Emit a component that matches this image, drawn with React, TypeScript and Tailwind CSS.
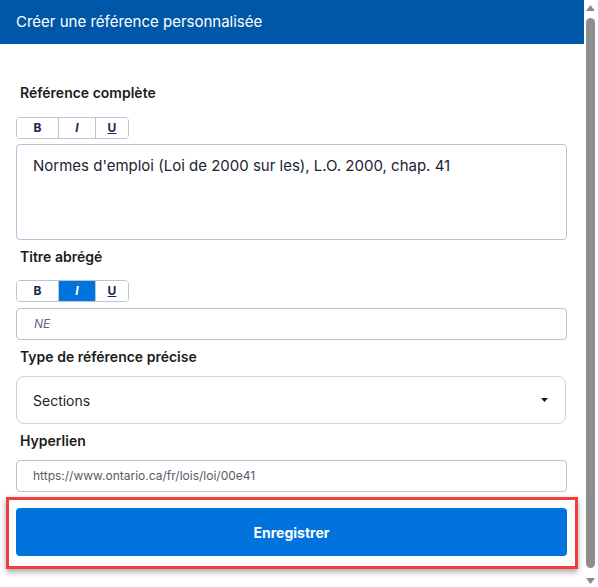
import React from 'react';

const font = { fontFamily: 'Inter, "Noto Sans", sans-serif' };

const Toolbar: React.FC<{ active?: 'B' | 'I' | 'U' }> = ({ active }) => {
  const btn = (key: 'B' | 'I' | 'U', w: string, extra: string) => (
    <div
      className={`${w} flex items-center justify-center text-[12px] font-bold ${extra} ${
        active === key ? 'bg-[#0073dd] text-white' : 'bg-white text-[#1b2550]'
      }`}
    >
      {key === 'I' ? <span className="italic">I</span> : key === 'U' ? <span className="underline">U</span> : 'B'}
    </div>
  );
  return (
    <div className="flex h-[22px] w-[113px] rounded-[4px] border border-[#b8c6da] overflow-hidden">
      {btn('B', 'w-[42px]', 'border-r border-[#b8c6da]')}
      {btn('I', 'w-[37px]', 'border-r border-[#b8c6da]')}
      {btn('U', 'flex-1', '')}
    </div>
  );
};

const Label: React.FC<{ children: React.ReactNode; className?: string }> = ({ children, className }) => (
  <div className={`pl-1 h-5 text-[14px] leading-5 font-semibold text-[#1c1c1c] ${className ?? ''}`}>{children}</div>
);

export default function App() {
  return (
    <div className="flex w-[598px] h-[587px] bg-white overflow-hidden" style={font}>
      {/* Main */}
      <div className="w-[584px] flex flex-col">
        <div className="h-[44px] bg-[#0057a7] flex items-center px-4 text-white text-[15px]">
          Créer une référence personnalisée
        </div>
        <div className="px-4 pt-[39px]">
          <Label>Référence complète</Label>
          <div className="mt-[14px]">
            <Toolbar />
          </div>
          <div className="mt-[5px] w-[551px] h-[96px] rounded-[4px] border border-[#b7c5d9] px-4 pt-[10px] text-[15px] text-[#1a2433]">
            Normes d'emploi (Loi de 2000 sur les), L.O. 2000, chap. 41
          </div>

          <Label className="mt-[7px]">Titre abrégé</Label>
          <div className="mt-[13px]">
            <Toolbar active="I" />
          </div>
          <div className="mt-[6px] w-[551px] h-[32px] rounded-[4px] border border-[#b7c5d9] flex items-center px-[17px] text-[12px] italic text-[#5b6880]">
            NE
          </div>

          <Label className="mt-[7px]">Type de référence précise</Label>
          <div className="mt-[9px] w-[550px] h-[48px] rounded-[8px] border border-[#d2d2d2] flex items-center justify-between pl-4 pr-[17px] text-[14px] text-[#222]">
            <span>Sections</span>
            <svg width="7" height="4" viewBox="0 0 7 4">
              <path d="M0 0h7L3.5 4z" fill="#1a1a1a" />
            </svg>
          </div>

          <Label className="mt-[7px]">Hyperlien</Label>
          <div className="mt-[9px] w-[551px] h-[32px] rounded-[4px] border border-[#b7c5d9] flex items-center px-4 text-[12px] text-[#555c66]">
            https://www.ontario.ca/fr/lois/loi/00e41
          </div>
        </div>
        <div className="mt-[5px] ml-[6px] w-[572px] h-[72px] border-[3px] border-[#f23d3d] shadow-[0_3px_6px_rgba(0,0,0,0.35)] pt-[8px] pl-[7px]">
          <div className="w-[551px] h-[48px] rounded-[4px] bg-[#0073dd] flex items-center justify-center text-white text-[14px] font-bold">
            Enregistrer
          </div>
        </div>
      </div>
      {/* Scrollbar */}
      <div className="w-[14px] flex flex-col items-center pt-[5px] pb-[3px] pr-[2px]">
        <svg width="9" height="6" viewBox="0 0 9 6">
          <path d="M4.5 0L9 6H0z" fill="#8a8a8a" />
        </svg>
        <div className="mt-[7px] w-[9px] flex-1 rounded-full bg-[#8d8d8d]" />
        <svg className="mt-[10px]" width="9" height="6" viewBox="0 0 9 6">
          <path d="M0 0h9L4.5 6z" fill="#8a8a8a" />
        </svg>
      </div>
    </div>
  );
}
